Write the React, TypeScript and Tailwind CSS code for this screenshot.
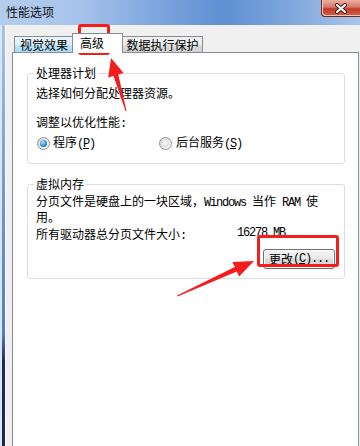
import React from "react";

const Mono = ({ children }: { children: React.ReactNode }) => (
    <span className="font-['Liberation_Mono',monospace] text-[12px] tracking-[-1.2px]">{children}</span>
);

const Radio = ({ checked }: { checked?: boolean }) => (
    <span className="flex items-center justify-center w-[13px] h-[13px] rounded-full border border-[#8e8f8f] bg-[linear-gradient(135deg,#d4d4d4,#ffffff)]">
        {checked ? (
            <span className="w-[7px] h-[7px] rounded-full bg-[radial-gradient(circle_at_40%_35%,#b9e8ff_0%,#2a8fd6_55%,#0c4c8e_100%)]" />
        ) : (
            <span className="w-[7px] h-[7px] rounded-full bg-[radial-gradient(circle_at_40%_35%,#ffffff_0%,#e2e2e2_60%,#c9c9c9_100%)]" />
        )}
    </span>
);

export default function App() {
    return (
        <div className="relative w-[360px] h-[446px] overflow-hidden flex flex-col font-['Noto_Sans_CJK_SC',sans-serif] text-[12px] text-black">
            {/* title bar */}
            <div className="h-[25px] shrink-0 flex items-start bg-[linear-gradient(to_right,#b4cdee_0%,#a6c3ea_22%,#7ba4dc_45%,#5f8fd2_62%,#7ea6dc_80%,#a9c5ea_100%)]">
                <span className="ml-[6px] mt-[4px] text-[12px] leading-[16px] text-[#101010]">性能选项</span>
                <div className="ml-auto w-[39px] h-[17px] flex items-center justify-center rounded-bl-[4px] border-l border-b border-[#6b2b24] bg-[linear-gradient(to_bottom,#eab1a4_0%,#d77563_45%,#c0392b_55%,#d9613f_100%)] shadow-[inset_1px_-1px_0_#f4c9bd]">
                    <svg width="14" height="11" viewBox="0 0 14 11">
                        <path d="M3 2 L11 9 M11 2 L3 9" stroke="#3a1a18" strokeWidth="4" strokeLinecap="round" />
                        <path d="M3 2 L11 9 M11 2 L3 9" stroke="#ffffff" strokeWidth="2.2" strokeLinecap="round" />
                    </svg>
                </div>
            </div>

            <div className="flex flex-1">
                {/* left frame */}
                <div className="w-[6px] shrink-0 border-l-[2px] border-r border-l-[#dbe6f3] border-r-white bg-[linear-gradient(to_bottom,#a7c4ea_0%,#6d97d6_40%,#4f7fc6_72%,#1f2a66_79%,#1e2356_100%)]" />

                {/* body */}
                <div className="flex-1 bg-[#f0f0f0] pt-[8px] pl-[6px] pr-[1px] flex flex-col">
                    <div className="h-[20px] flex items-end pl-[2px]">
                        <div className="w-[59px] h-[17px] flex items-center pl-[5px] border border-b-0 border-[#898c95] bg-[linear-gradient(to_bottom,#eaf6fd_0%,#d9f0fc_50%,#bee6fd_51%,#a7d9f5_100%)]">
                            视觉效果
                        </div>
                        <div className="relative z-10 -ml-[1px] w-[51px] h-[20px] flex items-center pl-[7px] pb-[1px] border border-b-0 border-[#898c95] bg-white">
                            高级
                        </div>
                        <div className="-ml-[1px] w-[81px] h-[17px] flex items-center justify-center border border-b-0 border-[#898c95] bg-[linear-gradient(to_bottom,#f2f2f2_0%,#ebebeb_50%,#dddddd_51%,#cfcfcf_100%)]">
                            数据执行保护
                        </div>
                    </div>

                    <div className="-mt-[1px] min-h-[400px] border border-[#898c95] bg-white pt-[13px] pl-[14px] pr-[13px]">
                        <fieldset className="border border-[#d5dfe5] rounded-[3px] px-[8px] pb-[13px]">
                            <legend className="-ml-[2px] px-[2px] leading-[14px]">处理器计划</legend>
                            <div className="pt-[6px] leading-[14px]">
                                选择如何分配处理器资源。
                            </div>
                            <div className="mt-[15px] leading-[14px]">
                                调整以优化性能<Mono>:</Mono>
                            </div>
                            <div className="mt-[5px] h-[14px] flex items-center">
                                <div className="flex items-center w-[123px] pl-[1px]">
                                    <Radio checked />
                                    <span className="ml-[3px] leading-[14px]">
                                        程序<Mono>(<span className="underline">P</span>)</Mono>
                                    </span>
                                </div>
                                <div className="flex items-center">
                                    <Radio />
                                    <span className="ml-[4px] leading-[14px]">
                                        后台服务<Mono>(<span className="underline">S</span>)</Mono>
                                    </span>
                                </div>
                            </div>
                        </fieldset>

                        <fieldset className="mt-[13px] border border-[#d5dfe5] rounded-[3px] px-[8px] pb-[9px]">
                            <legend className="-ml-[2px] px-[2px] leading-[14px]">虚拟内存</legend>
                            <div className="pt-[3px] leading-[13px]">
                                分页文件是硬盘上的一块区域，<Mono>Windows </Mono>当作<Mono> RAM </Mono>使
                                <br />
                                用。
                            </div>
                            <div className="mt-[4px] flex leading-[13px]">
                                <span className="w-[201px]">
                                    所有驱动器总分页文件大小<Mono>:</Mono>
                                </span>
                                <Mono>16278 MB</Mono>
                            </div>
                            <div className="mt-[6px] flex justify-end pr-[1px]">
                                <button className="w-[72px] h-[20px] flex items-center justify-center rounded-[3px] border border-[#707070] bg-[linear-gradient(to_bottom,#f2f2f2_0%,#ebebeb_45%,#dddddd_50%,#cfcfcf_100%)] shadow-[inset_0_0_0_1px_#fcfcfc] leading-[14px]">
                                    更改<Mono>(<span className="underline">C</span>)...</Mono>
                                </button>
                            </div>
                        </fieldset>
                    </div>
                </div>
            </div>

            {/* annotations */}
            <div className="absolute left-[78px] top-[24px] w-[32px] h-[31px] border-[3px] border-[#f51c1c] rounded-[3px]" />
            <div className="absolute left-[257px] top-[235px] w-[82px] h-[32px] border-[3px] border-[#f51c1c] rounded-[3px]" />
            <svg className="absolute inset-0 pointer-events-none" width="360" height="446" viewBox="0 0 360 446">
                <polygon points="111,58 123.6,73.1 118.3,74.6 126.5,111 125.5,111 113.5,76 108.2,77.5" fill="#f51c1c" />
                <polygon points="254,261 239.1,276.6 236.8,271.6 177.5,296.5 177,295.5 234.8,267 232.5,262" fill="#f51c1c" />
            </svg>
        </div>
    );
}
